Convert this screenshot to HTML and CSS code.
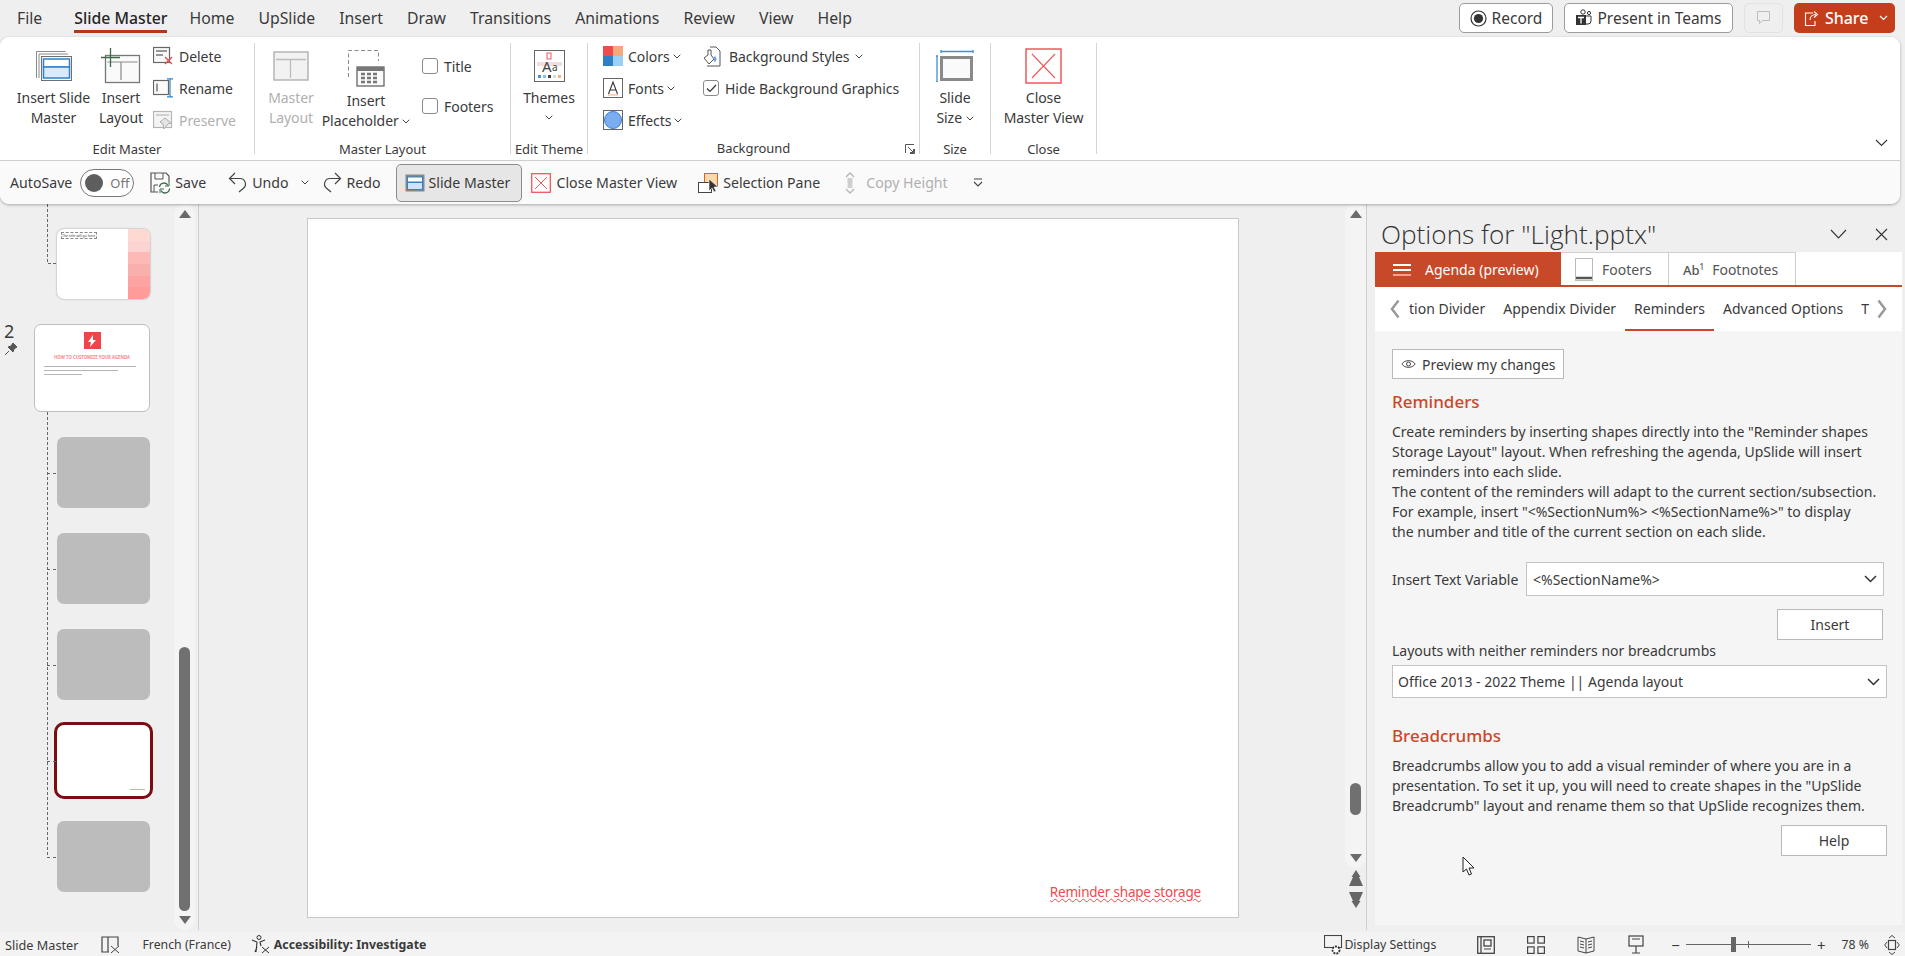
FILE: index.html
```html
<!DOCTYPE html>
<html>
  <head>
    <title>Light.pptx - PowerPoint</title>
    <link rel="stylesheet" href="styles.css">
  </head>
  <body>
    <!-- top tabs -->
    <header class="topbar">
      <nav class="tabs">
        <span class="tab-file">File</span>
        <span class="tab-active">Slide Master</span>
        <span>Home</span>
        <span>UpSlide</span>
        <span>Insert</span>
        <span>Draw</span>
        <span>Transitions</span>
        <span>Animations</span>
        <span>Review</span>
        <span>View</span>
        <span>Help</span>
      </nav>
      <div class="top-actions">
        <button class="top-btn record-btn"><svg width="17" height="17" viewBox="0 0 17 17"><circle cx="8.5" cy="8.5" r="7.5" fill="none" stroke="#333" stroke-width="1.2"/><circle cx="8.5" cy="8.5" r="4.6" fill="#333"/></svg>Record</button>
        <button class="top-btn teams-btn"><svg width="17" height="18" viewBox="0 0 17 18"><circle cx="8" cy="3" r="2.2" fill="none" stroke="#333"/><circle cx="14" cy="4" r="1.6" fill="none" stroke="#333"/><path d="M10 7h6v5a3 3 0 0 1-3 3h-3z" fill="none" stroke="#333"/><rect x="1" y="6" width="10" height="10" fill="#333"/><path d="M3 8.5h6M6 8.5v6" stroke="#fff" stroke-width="1.3"/></svg>Present in Teams</button>
        <button class="top-btn comment-btn"><svg width="15" height="16" viewBox="0 0 15 16"><path d="M1.500 1.500h12v9h-7l-3 3v-3h-2z" fill="none" stroke="#bdbdbd"/></svg></button>
        <button class="share-btn"><svg width="16" height="17" viewBox="0 0 16 17"><path d="M9 3H1.500v12.500H11V11M6 10c0-3.500 2.500-5.500 6-5.500M10 1.500l3.500 3-3.500 3" fill="none" stroke="#fff" stroke-width="1.100"/></svg><span>Share</span><svg class="share-chev" width="9" height="6" viewBox="0 0 9 6"><path d="M1 1l3.500 3.500L8 1" fill="none" stroke="#fff" stroke-width="1.100"/></svg></button>
      </div>
    </header>

    <div class="ribbon-wrap">
      <!-- ribbon -->
      <section class="ribbon">
        <div class="group group-edit-master">
          <div class="group-body">
            <div class="large-btn btn-slide-master">
              <div class="large-icon"><svg width="36" height="30" viewBox="0 0 36 30"><path d="M.5 27V.5h29" fill="none" stroke="#8a8a8a"/><path d="M3 27V3h29" fill="none" stroke="#8a8a8a"/><rect x="5.500" y="5.500" width="30" height="24" fill="#f8f8f8" stroke="#6f6f6f"/><rect x="7.500" y="8" width="26" height="8" fill="#fff" stroke="#2f83cc" stroke-width="1.500"/><rect x="7.500" y="16" width="26" height="11" fill="#dbeafa" stroke="#2f83cc" stroke-width="1.500"/></svg></div>
              <span>Insert Slide</span><span>Master</span>
            </div>
            <div class="large-btn btn-layout">
              <div class="large-icon"><svg width="40" height="36" viewBox="0 0 40 36"><rect x="4.500" y="7.500" width="34" height="27" fill="#fafafa" stroke="#777" stroke-width="1.300"/><path d="M6.500 14h30M20 14v18" stroke="#8a8a8a" stroke-width="1.200"/><path d="M0 9.500h19M9.500 0v19" stroke="#3d6b4c" stroke-width="1.300"/></svg></div>
              <span>Insert</span><span>Layout</span>
            </div>
            <div class="small-col">
              <div class="small-btn"><svg width="21" height="20" viewBox="0 0 21 20"><rect x=".5" y="1.500" width="16" height="15" fill="#fafafa" stroke="#666" stroke-width="1.200"/><path d="M3 5h11M3 9h7" stroke="#777" stroke-width="1.500"/><path d="M12 11l7 7M19 11l-7 7" stroke="#e8484e" stroke-width="1.300"/></svg>Delete</div>
              <div class="small-btn"><svg width="21" height="20" viewBox="0 0 21 20"><rect x=".5" y="2.500" width="15" height="14" fill="#fafafa" stroke="#666" stroke-width="1.200"/><path d="M4 5.500v8" stroke="#777" stroke-width="1.500"/><path d="M14 .8h6M17 .8v18M14 18.800h6" fill="none" stroke="#2f83cc" stroke-width="1.200"/></svg>Rename</div>
              <div class="small-btn is-disabled"><svg width="21" height="20" viewBox="0 0 21 20"><rect x=".5" y="1.500" width="18" height="16" fill="#f4f4f4" stroke="#b5b5b5" stroke-width="1.200"/><path d="M3 5h13" stroke="#c4c4c4" stroke-width="1.500"/><path d="M12 8l6 5-3 1-4 5-1-5-3-2z" fill="#e4e4e4" stroke="#aaa"/></svg>Preserve</div>
            </div>
          </div>
          <div class="group-label">Edit Master</div>
        </div>

        <div class="group group-master-layout">
          <div class="group-body">
            <div class="large-btn btn-master-layout is-disabled">
              <div class="large-icon"><svg width="36" height="30" viewBox="0 0 36 30"><rect x="1" y="1" width="34" height="28" fill="#f2f2f2" stroke="#b5b5b5" stroke-width="1.500"/><path d="M3 8.500h30M17.500 8.500V27" stroke="#bcbcbc" stroke-width="1.300"/></svg></div>
              <span>Master</span><span>Layout</span>
            </div>
            <div class="large-btn btn-placeholder">
              <div class="large-icon"><svg width="37" height="37" viewBox="0 0 37 37"><path d="M.5 27V.5h30V11" fill="none" stroke="#8a8a8a" stroke-dasharray="4 2.500"/><rect x="9" y="17" width="27" height="19" fill="#fafafa" stroke="#666" stroke-width="1.300"/><path d="M9 17h27v4H9z" fill="#777"/><path d="M13 24h4M19 24h4M25 24h4M13 28h4M19 28h4M25 28h4M13 32h4M19 32h4M25 32h4" stroke="#777" stroke-width="2.500"/></svg></div>
              <span>Insert</span><span>Placeholder <svg class="chev" width="8" height="5" viewBox="0 0 8 5"><path d="M.7.700L4 4 7.300.700" fill="none" stroke="#444"/></svg></span>
            </div>
            <div class="small-col check-col">
              <label class="check-row"><span class="checkbox"></span>Title</label>
              <label class="check-row"><span class="checkbox"></span>Footers</label>
            </div>
          </div>
          <div class="group-label">Master Layout</div>
        </div>

        <div class="group group-theme">
          <div class="group-body">
            <div class="large-btn btn-themes">
              <div class="large-icon"><svg width="31" height="32" viewBox="0 0 31 32"><rect x=".5" y=".5" width="30" height="31" fill="#fff" stroke="#666"/><rect x="13" y="3" width="4" height="6" fill="#fff" stroke="#f0585c"/><rect x="3" y="12" width="25" height="4" fill="#f4dcdc"/><text x="8" y="22" font-size="15" fill="#444" font-family="Noto Sans">A</text><text x="18" y="21" font-size="10" fill="#444" font-family="Noto Sans">a</text><rect x="4" y="25" width="3" height="3" fill="#4a90d9"/><rect x="9" y="25" width="3" height="3" fill="#87bdf0"/><rect x="14" y="25" width="3" height="3" fill="#444"/><rect x="19" y="25" width="3" height="3" fill="#ddd"/><rect x="24" y="25" width="3" height="3" fill="#f4b183"/></svg></div>
              <span>Themes</span>
              <svg class="chev chev-under" width="8" height="5" viewBox="0 0 8 5"><path d="M.7.700L4 4 7.300.700" fill="none" stroke="#444"/></svg>
            </div>
          </div>
          <div class="group-label">Edit Theme</div>
        </div>

        <div class="group group-background">
          <div class="group-body">
            <div class="small-col bg-col">
              <div class="small-btn"><svg width="20" height="20" viewBox="0 0 20 20"><rect width="10" height="10" fill="#f04a4f"/><rect x="10" width="10" height="10" fill="#f4a97c"/><rect y="10" width="10" height="10" fill="#2f7fc8"/><rect x="10" y="10" width="10" height="10" fill="#9bd0f7"/></svg>Colors <svg class="chev" width="8" height="5" viewBox="0 0 8 5"><path d="M.7.700L4 4 7.300.700" fill="none" stroke="#444"/></svg></div>
              <div class="small-btn"><svg width="20" height="20" viewBox="0 0 20 20"><rect x=".5" y=".5" width="19" height="19" fill="#fff" stroke="#666"/><path d="M5.500 16L10 4l4.500 12M7 12h6" fill="none" stroke="#333" stroke-width="1.100"/><path d="M5 17h10" stroke="#f4a97c"/></svg>Fonts <svg class="chev" width="8" height="5" viewBox="0 0 8 5"><path d="M.7.700L4 4 7.300.700" fill="none" stroke="#444"/></svg></div>
              <div class="small-btn"><svg width="20" height="20" viewBox="0 0 20 20"><rect x=".5" y=".5" width="19" height="19" fill="#fff" stroke="#666"/><circle cx="10" cy="10" r="8.500" fill="#7aaef0" stroke="#3c7ed0"/></svg>Effects <svg class="chev" width="8" height="5" viewBox="0 0 8 5"><path d="M.7.700L4 4 7.300.700" fill="none" stroke="#444"/></svg></div>
            </div>
            <div class="small-col bg-col2">
              <div class="small-btn"><svg width="18" height="21" viewBox="0 0 18 21"><path d="M7 1h6l4 4v15H4" fill="none" stroke="#555"/><path d="M5 4v5L1 12l5 6 5-5-3-4V4z" fill="#fff" stroke="#555"/><path d="M12 10c2 2 2 4 0 6-2-1-2-4 0-6z" fill="#6aa7e8"/></svg>Background Styles <svg class="chev" width="8" height="5" viewBox="0 0 8 5"><path d="M.7.700L4 4 7.300.700" fill="none" stroke="#444"/></svg></div>
              <label class="check-row hide-row"><span class="checkbox is-checked"><svg width="11" height="9" viewBox="0 0 11 9"><path d="M1 4.500l3 3 6-6.500" fill="none" stroke="#333" stroke-width="1.200"/></svg></span>Hide Background Graphics</label>
            </div>
          </div>
          <div class="group-label label-background">Background</div>
          <svg class="launcher" width="10" height="10" viewBox="0 0 10 10"><path d="M.5 9V.5H9M9.500 5v4.500H5M3 3l5.500 5.500M5 8.500h3.500V5" fill="none" stroke="#555"/></svg>
        </div>

        <div class="group group-size">
          <div class="group-body">
            <div class="large-btn">
              <div class="large-icon"><svg width="38" height="32" viewBox="0 0 38 32"><path d="M5 1.500h32M5 0v3M37 0v3" stroke="#3f8fd8" stroke-width="1.300"/><path d="M1 6v26M0 6h2M0 32h2" stroke="#3f8fd8" stroke-width="1.300"/><rect x="4" y="6" width="33" height="25" fill="#8a8a8a"/><rect x="7" y="9" width="27" height="19" fill="#fafafa"/></svg></div>
              <span>Slide</span><span>Size <svg class="chev" width="8" height="5" viewBox="0 0 8 5"><path d="M.7.700L4 4 7.300.700" fill="none" stroke="#444"/></svg></span>
            </div>
          </div>
          <div class="group-label">Size</div>
        </div>

        <div class="group group-close">
          <div class="group-body">
            <div class="large-btn btn-close">
              <div class="large-icon"><svg width="37" height="36" viewBox="0 0 37 36"><rect x="1" y="1" width="35" height="34" fill="#fff" stroke="#f0585c" stroke-width="1.500"/><path d="M7 6l23 24M30 6L7 30" stroke="#f0585c" stroke-width="1.100"/></svg></div>
              <span>Close</span><span>Master View</span>
            </div>
          </div>
          <div class="group-label">Close</div>
        </div>

        <svg class="collapse" width="13" height="8" viewBox="0 0 13 8"><path d="M1 1l5.500 5.500L12 1" fill="none" stroke="#333" stroke-width="1.100"/></svg>
      </section>

      <!-- quick access -->
      <section class="qat">
        <span class="qat-autosave">AutoSave</span>
        <span class="toggle"><i></i>Off</span>
        <div class="qat-item qat-save"><svg width="21" height="22" viewBox="0 0 21 22"><path d="M8 20H1V1h15l3 3v6" fill="none" stroke="#555" stroke-width="1.200"/><path d="M5 1v6h8V1M4 20v-7h4" fill="none" stroke="#555"/><path d="M9.500 15a4.500 4.500 0 0 1 8.500-1.500M19.500 16.500a4.500 4.500 0 0 1-8.500 2" fill="none" stroke="#3d6b4c" stroke-width="1.300"/><path d="M19 10v4h-4M10 21v-4h4" fill="none" stroke="#3d6b4c"/></svg>Save</div>
        <div class="qat-item qat-undo"><svg width="20" height="21" viewBox="0 0 20 21"><path d="M7 1L1.500 6.500 7 12M2 6.500h10a5.500 5.500 0 0 1 3.500 9.700L11 20" fill="none" stroke="#444" stroke-width="1.200"/></svg>Undo</div>
        <svg class="qat-chev" width="8" height="5" viewBox="0 0 8 5"><path d="M.7.700L4 4 7.300.700" fill="none" stroke="#444"/></svg>
        <div class="qat-item qat-redo"><svg width="20" height="21" viewBox="0 0 20 21"><path d="M13 1l5.500 5.500L13 12M18 6.500H8a5.500 5.500 0 0 0-3.500 9.700L9 20" fill="none" stroke="#444" stroke-width="1.200"/></svg>Redo</div>
        <div class="qat-item qat-master"><svg width="20" height="20" viewBox="0 0 20 20"><rect x=".5" y="1.500" width="19" height="17" fill="#888"/><rect x="2.500" y="4" width="15" height="5" fill="#fff" stroke="#2f83cc"/><rect x="2.500" y="9.500" width="15" height="7" fill="#cfe4fa" stroke="#2f83cc"/></svg>Slide Master</div>
        <div class="qat-item qat-close"><svg width="20" height="20" viewBox="0 0 20 20"><rect x=".7" y=".7" width="18.600" height="18.600" fill="#fff" stroke="#f0585c" stroke-width="1.300"/><path d="M4 4l12 12M16 4L4 16" stroke="#f0585c"/></svg>Close Master View</div>
        <div class="qat-item qat-selection"><svg width="21" height="20" viewBox="0 0 21 20"><rect x="6.500" y=".5" width="13" height="13" fill="#fbd9a8" stroke="#d9622c"/><rect x=".5" y="9.500" width="13" height="10" fill="#fff" stroke="#444"/><path d="M11 6v12l3-3 2 4 2-1-2-4h4z" fill="#333" stroke="#fff" stroke-width=".6"/></svg>Selection Pane</div>
        <div class="qat-item qat-copy is-disabled"><svg width="10" height="22" viewBox="0 0 10 22"><path d="M1 5l4-4 4 4M1 17l4 4 4-4" fill="none" stroke="#b5b5b5" stroke-width="1.300"/><rect x="2.500" y="6" width="5" height="10" fill="#cfcfcf"/></svg>Copy Height</div>
        <svg class="qat-more" width="10" height="9" viewBox="0 0 10 9"><path d="M1 1h8M1 4l4 4 4-4" fill="none" stroke="#444" stroke-width="1.100"/></svg>
      </section>
    </div>

    <main class="workspace">
      <!-- slide thumbnails -->
      <aside class="thumbs">
        <div class="thumb-list">
          <div class="layouts layouts-first">
            <div class="thumb thumb-swatch">
              <span class="thumb-title">The title will go here</span>
              <div class="swatch"><i></i><i></i><i></i><i></i><i></i><i></i></div>
            </div>
          </div>
          <div class="master-row">
            <div class="master-num"><span>2</span><svg width="14" height="14" viewBox="0 0 14 14"><path d="M1 13l4-4M4 5l5 5 1-3 3-2-4-4-2 3z" fill="#555" stroke="#555"/></svg></div>
            <div class="master-thumb">
              <div class="master-logo"><svg width="12" height="12" viewBox="0 0 12 12"><path d="M7 0L2 7h3l-1 5 6-7H7z" fill="#fff"/></svg></div>
              <div class="master-heading">HOW TO CUSTOMIZE YOUR AGENDA</div>
              <i class="fake-line"></i>
              <i class="fake-line fake-mid"></i>
              <i class="fake-line fake-short"></i>
            </div>
          </div>
          <div class="layouts">
            <div class="thumb thumb-gray"></div>
            <div class="thumb thumb-gray"></div>
            <div class="thumb thumb-gray"></div>
            <div class="thumb thumb-selected"><i></i></div>
            <div class="thumb thumb-gray"></div>
          </div>
        </div>
        <div class="scroll-track left-track">
          <span class="arrow-up"></span>
          <span class="scroll-thumb left-thumb"></span>
          <span class="arrow-down"></span>
        </div>
      </aside>

      <!-- slide area -->
      <section class="stage">
        <div class="slide">
          <span class="slide-link">Reminder shape storage</span>
        </div>
      </section>
      <div class="stage-scroll">
        <div class="scroll-track right-track">
          <span class="arrow-up"></span>
          <span class="scroll-thumb right-thumb"></span>
          <span class="arrow-down"></span>
        </div>
        <div class="page-arrows">
          <svg width="14" height="16" viewBox="0 0 14 16"><path d="M7 0l4.500 7H10l4 9H0l4-9H2.500z" fill="#666"/></svg>
          <svg width="14" height="16" viewBox="0 0 14 16"><path d="M0 0h14l-4 9h1.500L7 16 2.500 9H4z" fill="#666"/></svg>
        </div>
      </div>

      <!-- options pane -->
      <aside class="pane">
        <div class="pane-head">
          <h1>Options for "Light.pptx"</h1>
          <svg width="17" height="10" viewBox="0 0 17 10"><path d="M1 1l7.500 8L16 1" fill="none" stroke="#333" stroke-width="1.100"/></svg>
          <svg width="13" height="13" viewBox="0 0 13 13"><path d="M1 1l11 11M12 1L1 12" fill="none" stroke="#333" stroke-width="1.100"/></svg>
        </div>
        <div class="pane-tabs">
          <div class="pane-tab pane-tab-active"><svg width="18" height="14" viewBox="0 0 18 14"><path d="M0 2h18M0 7h18" stroke="#fff" stroke-width="2"/><path d="M0 12h18" stroke="#f4a090" stroke-width="2"/></svg>Agenda (preview)</div>
          <div class="pane-tab pane-tab-footers"><svg width="18" height="23" viewBox="0 0 18 23"><rect x=".5" y=".5" width="17" height="22" fill="#fff" stroke="#bbb"/><path d="M1 20h16" stroke="#555" stroke-width="2.500"/></svg>Footers</div>
          <div class="pane-tab pane-tab-notes"><span class="ab">Ab<sup>1</sup></span>Footnotes</div>
        </div>
        <div class="sub-tabs">
          <svg class="sub-chev" width="10" height="20" viewBox="0 0 10 20"><path d="M8.500 1.500L2 10l6.500 8.500" fill="none" stroke="#999" stroke-width="2.500"/></svg>
          <span class="sub-tab">tion Divider</span>
          <span class="sub-tab">Appendix Divider</span>
          <span class="sub-tab sub-tab-active">Reminders</span>
          <span class="sub-tab">Advanced Options</span>
          <span class="sub-tab sub-tab-cut">T</span>
          <svg class="sub-chev" width="10" height="20" viewBox="0 0 10 20"><path d="M1.500 1.500L8 10l-6.500 8.500" fill="none" stroke="#999" stroke-width="2.500"/></svg>
        </div>
        <div class="pane-body">
          <button class="ghost-btn preview-btn"><svg width="15" height="10" viewBox="0 0 15 10"><path d="M.8 5C4 .5 11 .5 14.200 5 11 9.500 4 9.500.8 5z" fill="none" stroke="#444"/><circle cx="7.500" cy="5" r="2" fill="none" stroke="#444"/></svg>Preview my changes</button>
          <h2>Reminders</h2>
          <p>Create reminders by inserting shapes directly into the "Reminder shapes<br>Storage Layout" layout. When refreshing the agenda, UpSlide will insert<br>reminders into each slide.<br>The content of the reminders will adapt to the current section/subsection.<br>For example, insert "&lt;%SectionNum%&gt; &lt;%SectionName%&gt;" to display<br>the number and title of the current section on each slide.</p>
          <div class="field-row">
            <span>Insert Text Variable</span>
            <div class="dropdown dropdown-var">&lt;%SectionName%&gt;<svg width="13" height="8" viewBox="0 0 13 8"><path d="M1 1l5.500 5.500L12 1" fill="none" stroke="#333" stroke-width="1.500"/></svg></div>
          </div>
          <div class="btn-row"><button class="ghost-btn action-btn">Insert</button></div>
          <div class="field-label">Layouts with neither reminders nor breadcrumbs</div>
          <div class="dropdown dropdown-layouts">Office 2013 - 2022 Theme || Agenda layout<svg width="13" height="8" viewBox="0 0 13 8"><path d="M1 1l5.500 5.500L12 1" fill="none" stroke="#333" stroke-width="1.500"/></svg></div>
          <h2 class="crumbs-title">Breadcrumbs</h2>
          <p>Breadcrumbs allow you to add a visual reminder of where you are in a<br>presentation. To set it up, you will need to create shapes in the "UpSlide<br>Breadcrumb" layout and rename them so that UpSlide recognizes them.</p>
          <div class="btn-row btn-row-help"><button class="ghost-btn action-btn">Help</button></div>
        </div>
        <svg class="cursor" width="13" height="20" viewBox="0 0 13 20"><path d="M1 1v15l3.500-3 2.500 6 2.500-1-2.500-6H12z" fill="#fff" stroke="#222"/></svg>
      </aside>
    </main>

    <!-- status bar -->
    <footer class="status">
      <span class="st-mode">Slide Master</span>
      <svg class="st-notes" width="20" height="18" viewBox="0 0 20 18"><path d="M8 16H1V1h16v9M7 1v15" fill="none" stroke="#444" stroke-width="1.200"/><path d="M10 10l8 7M18 10l-8 7" stroke="#444"/></svg>
      <span class="st-lang">French (France)</span>
      <svg class="st-acc" width="19" height="19" viewBox="0 0 19 19"><circle cx="8" cy="2.500" r="2" fill="none" stroke="#333"/><path d="M1 5l5 2-1 10M14 5L9 7l1 4M6 12l-2 5" fill="none" stroke="#333" stroke-width="1.100"/><path d="M11 12l7 6M18 12l-7 6" stroke="#333"/></svg>
      <b class="st-check">Accessibility: Investigate</b>
      <svg class="st-display" width="19" height="20" viewBox="0 0 19 20"><rect x=".5" y=".5" width="17" height="12" fill="none" stroke="#444" stroke-width="1.100"/><circle cx="12" cy="15" r="3.500" fill="#fff" stroke="#333" stroke-width="1.800" stroke-dasharray="2 1"/></svg>
      <span class="st-settings">Display Settings</span>
      <svg class="st-view1" width="18" height="18" viewBox="0 0 18 18"><rect x=".7" y=".7" width="16.600" height="16.600" fill="none" stroke="#444" stroke-width="1.300"/><path d="M4 1v16" stroke="#444" stroke-width="1.300"/><rect x="7" y="4" width="7" height="6" fill="none" stroke="#444" stroke-width="1.300"/><path d="M7 13h7" stroke="#444"/></svg>
      <svg class="st-view2" width="18" height="18" viewBox="0 0 18 18"><g fill="none" stroke="#444" stroke-width="1.200"><rect x=".6" y=".6" width="6.500" height="6.500"/><rect x="10.900" y=".6" width="6.500" height="6.500"/><rect x=".6" y="10.900" width="6.500" height="6.500"/><rect x="10.900" y="10.900" width="6.500" height="6.500"/></g></svg>
      <svg class="st-view3" width="18" height="18" viewBox="0 0 18 18"><path d="M9 3L1 1v14l8 2 8-2V1zM9 3v14M3 5l4 1M3 8l4 1M3 11l4 1M11 6l4-1M11 9l4-1M11 12l4-1" fill="none" stroke="#444"/></svg>
      <svg class="st-view4" width="16" height="19" viewBox="0 0 16 19"><rect x="1" y="1" width="14" height="10" fill="none" stroke="#444" stroke-width="1.200"/><path d="M4 4h8M8 11v7M4 18h8" stroke="#444" stroke-width="1.200"/></svg>
      <div class="zoom-slider">
        <span class="zoom-sign">&minus;</span>
        <div class="zoom-track"><i class="zoom-thumb"></i><i class="zoom-mid"></i></div>
        <span class="zoom-sign">+</span>
      </div>
      <span class="st-zoom">78 %</span>
      <svg class="st-fit" width="16" height="20" viewBox="0 0 16 20"><rect x="4.500" y="5.500" width="7" height="9" fill="none" stroke="#444" stroke-width="1.200"/><path d="M5 3l3-2.500L11 3M5 17l3 2.500 3-2.500M3 7L.7 10 3 13M13 7l2.300 3L13 13" fill="none" stroke="#444"/></svg>
    </footer>
  </body>
</html>
```

FILE: styles.css
```css
* {
  box-sizing: border-box;
}

body {
  display: flex;
  flex-direction: column;
  width: 1905px;
  height: 956px;
  margin: 0;
  overflow: hidden;
  background-color: #efefef;
  color: #3a3a3a;
  font-family: "Noto Sans", "Open Sans", sans-serif;
  font-size: 14px;
  letter-spacing: -0.05px;
}

button {
  font-family: inherit;
  color: inherit;
  letter-spacing: inherit;
}

svg {
  flex-shrink: 0;
}

/* top tabs */
.topbar {
  display: flex;
  height: 37px;
  align-items: center;
  padding: 0 10px 1px 17px;
}

.tabs {
  display: flex;
  gap: 24px;
  font-size: 15.800px;
  letter-spacing: 0;
}

.tab-file {
  margin-right: 8px;
}

.tab-active {
  position: relative;
  margin-right: -2px;
  font-weight: 500;
  color: #262626;
}

.tab-active::after {
  content: "";
  position: absolute;
  left: 0;
  right: 0;
  bottom: -4px;
  height: 3px;
  background-color: #b5371c;
}

.top-actions {
  display: flex;
  gap: 11px;
  margin-left: auto;
}

.top-btn {
  display: flex;
  align-items: center;
  justify-content: center;
  gap: 5px;
  height: 30px;
  padding: 0;
  background-color: #fff;
  border: 1px solid #9c9c9c;
  border-radius: 5px;
  font-size: 15.500px;
  letter-spacing: 0;
}

.record-btn {
  width: 94px;
}

.teams-btn {
  width: 169px;
}

.comment-btn {
  width: 39px;
  background-color: #efefef;
  border-color: #e2e2e2;
}

.share-btn {
  display: flex;
  align-items: center;
  width: 101px;
  height: 30px;
  padding: 0 7px 0 10px;
  background-color: #c43e1c;
  border: none;
  border-radius: 5px;
  color: #fff;
  font-size: 16px;
  font-weight: 500;
}

.share-btn span {
  margin-left: 5px;
}

.share-chev {
  margin-left: auto;
}

/* ribbon */
.ribbon-wrap {
  position: relative;
  z-index: 2;
  width: 1900px;
  height: 167px;
  border-radius: 9px;
  box-shadow: 0 1px 3px rgba(0, 0, 0, 0.3);
}

.ribbon {
  position: relative;
  display: flex;
  height: 124px;
  padding-top: 6px;
  background-color: #fff;
  border-bottom: 1px solid #cfcfcf;
  border-radius: 9px 9px 0 0;
}

.group {
  position: relative;
  display: flex;
  flex-direction: column;
  height: 111px;
  border-right: 1px solid #d4d4d4;
}

.group-body {
  display: flex;
  flex-shrink: 0;
  height: 100px;
}

.group-label {
  flex-shrink: 0;
  text-align: center;
  font-size: 13px;
  line-height: 13px;
}

.label-background {
  margin-top: -1px;
}

.group-edit-master {
  width: 255px;
}

.group-master-layout {
  width: 256px;
}

.group-theme {
  width: 77px;
}

.group-background {
  width: 332px;
}

.group-size {
  width: 71px;
}

.group-close {
  width: 106px;
}

.large-btn {
  display: flex;
  flex-direction: column;
  align-items: center;
  flex-shrink: 0;
  line-height: 20px;
  white-space: nowrap;
}

.large-icon {
  display: flex;
  align-items: center;
  justify-content: center;
  height: 45px;
}

.is-disabled {
  color: #b0b0b0;
}

.chev {
  vertical-align: 2px;
}

.chev-under {
  margin-top: 7px;
}

.btn-slide-master {
  width: 77px;
  margin: 0 5px 0 15px;
}

.btn-layout {
  width: 48px;
  margin-right: 8px;
}

.btn-master-layout {
  width: 46px;
  margin-left: 13px;
}

.btn-placeholder {
  width: 92px;
  margin-left: 6px;
  padding-top: 3px;
}

.btn-themes {
  width: 76px;
}

.group-size .large-btn,
.group-close .large-btn {
  width: 100%;
}

.small-col {
  display: flex;
  flex-direction: column;
  gap: 6px;
}

.small-btn {
  display: flex;
  align-items: center;
  gap: 5px;
  height: 26px;
  white-space: nowrap;
}

.check-col {
  gap: 14px;
  margin-left: 10px;
  padding-top: 10px;
}

.check-row {
  display: flex;
  align-items: center;
  gap: 6px;
  height: 26px;
  white-space: nowrap;
}

.checkbox {
  display: flex;
  align-items: center;
  justify-content: center;
  width: 16px;
  height: 16px;
  background-color: #fff;
  border: 1px solid #8a8a8a;
  border-radius: 3px;
}

.bg-col {
  width: 100px;
  margin-left: 15px;
}

.bg-col .chev {
  margin-left: -2px;
}

.bg-col2 .chev {
  margin-left: -3px;
}

.bg-col2 .small-btn {
  gap: 8px;
}

.launcher {
  position: absolute;
  right: 4px;
  bottom: 0;
}

.collapse {
  position: absolute;
  right: 12px;
  top: 102px;
}

/* quick access */
.qat {
  display: flex;
  align-items: center;
  height: 43px;
  padding-left: 10px;
  background-color: #fafafa;
  border-radius: 0 0 9px 9px;
  font-size: 14.150px;
  letter-spacing: 0;
  white-space: nowrap;
}

.qat-item {
  display: flex;
  align-items: center;
  gap: 4px;
}

.toggle {
  display: flex;
  align-items: center;
  gap: 7px;
  width: 54px;
  height: 28px;
  margin-left: 8px;
  padding-left: 4px;
  background-color: #fff;
  border: 1px solid #777;
  border-radius: 14px;
  color: #777;
  font-size: 13px;
}

.toggle i {
  width: 18px;
  height: 18px;
  background-color: #5e5e5e;
  border-radius: 50%;
}

.qat-save {
  margin-left: 16px;
}

.qat-undo {
  margin-left: 22px;
}

.qat-chev {
  margin-left: 13px;
}

.qat-redo {
  margin-left: 13px;
}

.qat-master {
  width: 126px;
  height: 38px;
  margin-left: 15px;
  padding-left: 8px;
  background-color: #e6e6e6;
  border: 1px solid #8c8c8c;
  border-radius: 5px;
}

.qat-close {
  gap: 6px;
  margin-left: 9px;
}

.qat-selection {
  margin-left: 21px;
}

.qat-copy {
  gap: 11px;
  margin-left: 25px;
}

.qat-more {
  margin-left: 25px;
}

/* workspace */
.workspace {
  display: flex;
  height: 728px;
  letter-spacing: 0;
}

.thumbs {
  display: flex;
  width: 199px;
  height: 726px;
  border-right: 1px solid #cfcfcf;
}

.thumb-list {
  width: 174px;
}

.layouts {
  position: relative;
  display: flex;
  flex-direction: column;
  gap: 25px;
  margin-left: 47px;
  padding: 25px 0 0 10px;
}

.layouts::before {
  content: "";
  position: absolute;
  left: 0;
  top: 0;
  bottom: 37px;
  border-left: 1px dashed #666;
}

.thumb {
  position: relative;
  width: 93px;
  height: 71px;
  background-color: #fff;
  border-radius: 7px;
}

.thumb::before {
  content: "";
  position: absolute;
  left: -10px;
  top: 50%;
  width: 9px;
  border-top: 1px dashed #666;
}

.thumb-swatch {
  height: 70px;
  overflow: hidden;
  box-shadow: 0 0 2px rgba(0, 0, 0, 0.4);
}

.thumb-swatch::before {
  display: none;
}

.layouts-first::after {
  content: "";
  position: absolute;
  left: 1px;
  bottom: 35px;
  width: 8px;
  border-top: 1px dashed #666;
}

.thumb-title {
  display: block;
  width: 36px;
  margin: 3px 0 0 4px;
  border: 1px dashed #888;
  font-size: 3.500px;
  line-height: 5px;
  white-space: nowrap;
  overflow: hidden;
}

.swatch {
  position: absolute;
  top: 0;
  right: 0;
  bottom: 0;
  display: flex;
  flex-direction: column;
  width: 22px;
}

.swatch i {
  flex: 1;
  background-color: #fdd9d2;
}

.swatch i:nth-child(2) {
  background-color: #fbd3d1;
}

.swatch i:nth-child(3) {
  background-color: #fdb9b5;
}

.swatch i:nth-child(4) {
  background-color: #f9b0ac;
}

.swatch i:nth-child(5) {
  background-color: #fda4a2;
}

.swatch i:nth-child(6) {
  background-color: #ff9c9a;
}

.thumb-gray {
  background-color: #bcbcbc;
}

.thumb-selected {
  outline: 3px solid #7a0c12;
  outline-offset: 0;
}

.thumb-selected i {
  position: absolute;
  right: 5px;
  bottom: 6px;
  width: 15px;
  height: 1px;
  background-color: #f6a0a0;
}

.master-row {
  display: flex;
  margin-top: 25px;
}

.master-num {
  display: flex;
  flex-direction: column;
  align-items: flex-start;
  gap: 4px;
  width: 34px;
  padding-left: 4px;
  font-size: 18px;
  line-height: 14px;
}

.master-thumb {
  position: relative;
  z-index: 1;
  width: 116px;
  height: 88px;
  padding-top: 7px;
  background-color: #fff;
  border: 1px solid #bdbdbd;
  border-radius: 7px;
  text-align: center;
}

.master-logo {
  display: flex;
  align-items: center;
  justify-content: center;
  width: 17px;
  height: 17px;
  margin: 0 auto 5px;
  background-color: #f0444a;
}

.master-heading {
  margin-bottom: 6px;
  color: #f58a8a;
  font-size: 4.300px;
  font-weight: 700;
  line-height: 6px;
}

.fake-line {
  display: block;
  width: 92px;
  height: 1px;
  margin: 0 0 3px 9px;
  background-color: #b5b5b5;
}

.fake-mid {
  width: 74px;
}

.fake-short {
  width: 38px;
  margin-top: 2px;
}

.scroll-track {
  display: flex;
  flex-direction: column;
  align-items: center;
  width: 21px;
  background-color: #f4f4f4;
  border-radius: 10px;
}

.left-track {
  height: 726px;
  padding: 6px 0;
}

.arrow-up,
.arrow-down {
  width: 0;
  height: 0;
  flex-shrink: 0;
  border-left: 6px solid transparent;
  border-right: 6px solid transparent;
}

.arrow-up {
  border-bottom: 8px solid #6a6a6a;
}

.arrow-down {
  border-top: 8px solid #6a6a6a;
}

.scroll-thumb {
  width: 11px;
  background-color: #707070;
  border-radius: 6px;
}

.left-thumb {
  height: 264px;
  margin: auto 0 5px;
}

/* slide area */
.stage {
  width: 1146px;
  padding: 14px 0 0 108px;
}

.slide {
  display: flex;
  align-items: flex-end;
  justify-content: flex-end;
  width: 932px;
  height: 700px;
  padding: 0 37px 16px 0;
  background-color: #fff;
  border: 1px solid #c8c8c8;
}

.slide-link {
  color: #f2474d;
  font-size: 13.500px;
  letter-spacing: -0.2px;
  text-decoration: underline wavy #f2474d 1px;
}

.stage-scroll {
  display: flex;
  flex-direction: column;
  align-items: center;
  width: 22px;
  height: 726px;
  border-right: 1px solid #cfcfcf;
}

.right-track {
  height: 664px;
  padding: 6px 0;
}

.right-thumb {
  height: 32px;
  margin: auto 0 39px;
}

.page-arrows {
  display: flex;
  flex-direction: column;
  gap: 6px;
  margin-top: 2px;
}

/* options pane */
.pane {
  position: relative;
  width: 527px;
  height: 721px;
  margin-left: 8px;
}

.pane-head {
  display: flex;
  align-items: center;
  gap: 28px;
  height: 48px;
  padding: 12px 14px 0 6px;
}

.pane-head h1 {
  margin: 0 auto 0 0;
  font-family: "Open Sans", "Noto Sans", sans-serif;
  font-size: 26.200px;
  font-weight: 300;
  color: #333;
}

.pane-tabs {
  display: flex;
  height: 35px;
  background-color: #fff;
  border-bottom: 2px solid #c8492a;
}

.pane-tab {
  display: flex;
  align-items: center;
  height: 33px;
  padding-top: 1px;
  color: #555;
  border-top: 1px solid #cfcfcf;
  border-right: 1px solid #cfcfcf;
}

.pane-tab-active {
  gap: 14px;
  width: 186px;
  height: 34px;
  padding-left: 18px;
  background-color: #c8492a;
  border: none;
  color: #fff;
}

.pane-tab-footers {
  gap: 9px;
  width: 108px;
  padding-left: 14px;
}

.pane-tab-notes {
  gap: 8px;
  width: 127px;
  padding-left: 14px;
}

.ab {
  font-size: 13px;
  font-weight: 500;
}

.ab sup {
  font-size: 8px;
  line-height: 0;
}

.sub-tabs {
  display: flex;
  align-items: center;
  height: 44px;
  padding-left: 15px;
  background-color: #fff;
}

.sub-tab {
  display: flex;
  align-items: center;
  height: 44px;
  margin-left: 18px;
  padding-bottom: 2px;
  white-space: nowrap;
}

.sub-tabs .sub-tab:first-of-type {
  margin-left: 9px;
}

.sub-tab-active {
  margin-right: -9px;
  margin-left: 9px;
  padding: 0 9px;
  border-bottom: 2px solid #c8492a;
}

.sub-tab-cut {
  width: 16px;
}

.pane-body {
  height: 594px;
  padding: 18px 18px 0 17px;
  background-color: #f5f5f5;
}

.ghost-btn {
  background-color: #fff;
  border: 1px solid #b9b9b9;
  font-size: 14px;
  padding: 0;
}

.preview-btn {
  display: flex;
  align-items: center;
  gap: 6px;
  width: 172px;
  height: 30px;
  padding-left: 8px;
}

.pane-body h2 {
  margin: 12px 0 9px;
  color: #c8492a;
  font-size: 17px;
  font-weight: 500;
  line-height: 22px;
}

.pane-body p {
  margin: 0;
  line-height: 20px;
  white-space: nowrap;
}

.field-row {
  display: flex;
  align-items: center;
  justify-content: space-between;
  width: 492px;
  margin-top: 20px;
}

.dropdown {
  display: flex;
  align-items: center;
  justify-content: space-between;
  height: 34px;
  padding: 0 6px;
  background-color: #fff;
  border: 1px solid #c4c4c4;
  white-space: nowrap;
}

.dropdown-var {
  width: 358px;
}

.btn-row {
  display: flex;
  justify-content: flex-end;
  width: 491px;
  margin-top: 13px;
}

.action-btn {
  width: 106px;
  height: 31px;
}

.field-label {
  margin-top: 1px;
  line-height: 20px;
}

.dropdown-layouts {
  width: 495px;
  height: 33px;
  margin-top: 4px;
  padding-left: 5px;
}

.pane-body .crumbs-title {
  margin-top: 27px;
}

.btn-row-help {
  width: 495px;
  margin-top: 9px;
}

.cursor {
  position: absolute;
  left: 87px;
  top: 652px;
}

/* status bar */
.status {
  display: flex;
  align-items: center;
  height: 24px;
  padding-top: 1px;
  background-color: #f3f3f3;
  font-size: 12.300px;
  letter-spacing: 0;
  white-space: nowrap;
}

.st-mode {
  margin-left: 5px;
  font-size: 12.700px;
}

.st-notes {
  margin-left: 23px;
}

.st-lang {
  margin-left: 21px;
}

.st-acc {
  margin-left: 20px;
}

.st-check {
  margin-left: 4px;
  font-weight: 700;
}

.st-display {
  margin-left: auto;
}

.st-settings {
  margin-left: 1px;
}

.st-view1 {
  margin-left: 41px;
}

.st-view2 {
  margin-left: 32px;
}

.st-view3 {
  margin-left: 32px;
}

.st-view4 {
  margin-left: 33px;
}

.zoom-slider {
  display: flex;
  align-items: center;
  gap: 6px;
  margin-left: 27px;
  font-size: 15px;
}

.zoom-track {
  position: relative;
  width: 125px;
  height: 1px;
  background-color: #666;
}

.zoom-thumb {
  position: absolute;
  left: 45px;
  top: -7px;
  width: 5px;
  height: 15px;
  background-color: #666;
}

.zoom-mid {
  position: absolute;
  left: 62px;
  top: -3px;
  width: 1px;
  height: 7px;
  background-color: #666;
}

.st-zoom {
  margin-left: 16px;
}

.st-fit {
  margin: 0 5px 0 15px;
}
```
